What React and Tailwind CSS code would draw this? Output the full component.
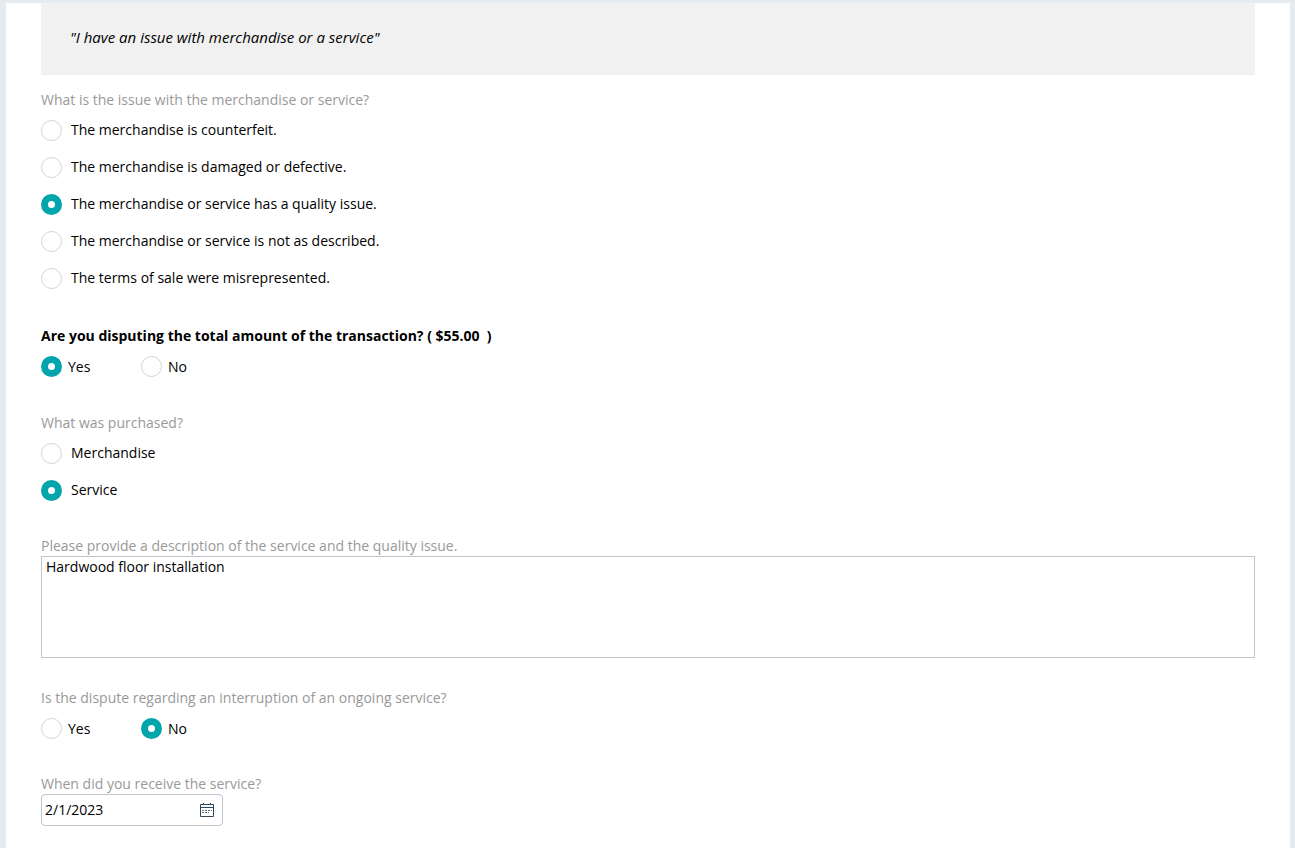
import clsx from 'clsx'

const issues = [
  'The merchandise is counterfeit.',
  'The merchandise is damaged or defective.',
  'The merchandise or service has a quality issue.',
  'The merchandise or service is not as described.',
  'The terms of sale were misrepresented.',
]

function RadioOption({ name, label, checked, className }) {
  return (
    <label className={clsx('flex cursor-pointer', className)}>
      <input
        type="radio"
        name={name}
        value={label}
        defaultChecked={checked}
        className="size-[21px] shrink-0 appearance-none rounded-full border border-[#cfd4dc] bg-white checked:border-7 checked:border-[#03a5ad]"
      />
      <span>{label}</span>
    </label>
  )
}

function RadioGroup({ legend, name, options, value, inline = false, strong = false, className }) {
  return (
    <fieldset className={className}>
      <legend className={clsx('mb-[10px] whitespace-pre', strong ? 'font-bold' : 'text-[#999999]')}>
        {legend}
      </legend>
      <div className={inline ? 'flex' : 'flex flex-col items-start gap-4'}>
        {options.map((option) => (
          <RadioOption
            key={option}
            name={name}
            label={option}
            checked={option === value}
            className={inline ? 'h-[21px] w-[100px] items-center gap-[6px]' : 'h-[21px] items-start gap-[9px]'}
          />
        ))}
      </div>
    </fieldset>
  )
}

function CalendarIcon() {
  return (
    <svg viewBox="0 0 14 14" className="size-[14px]" fill="none" stroke="#33475b" aria-hidden="true">
      <path d="M.5 1.5h13v12H.5zM.5 4.5h13M3.5 0v2M10.5 0v2" />
      <path d="M2 7.5h10M2 9.5h7" strokeDasharray="2 1" strokeOpacity=".8" />
    </svg>
  )
}

export default function App() {
  return (
    <div className="min-h-screen bg-[#e5ebee] pt-[3px] pr-[5px] pl-[6px] font-['Open_Sans',sans-serif] text-[14px] leading-[20px] text-black">
      <form className="min-h-[calc(100vh-3px)] bg-white px-[35px] pb-5">
        <div className="h-[72px] bg-[#f1f1f1] px-[29px] pt-6 text-[15px] italic">
          "I have an issue with merchandise or a service"
        </div>

        <RadioGroup
          className="mt-[15px]"
          legend="What is the issue with the merchandise or service?"
          name="issue"
          options={issues}
          value={issues[2]}
        />

        <RadioGroup
          className="mt-[37px]"
          legend="Are you disputing the total amount of the transaction? ( $55.00  )"
          name="total"
          options={['Yes', 'No']}
          value="Yes"
          inline
          strong
        />

        <RadioGroup
          className="mt-9"
          legend="What was purchased?"
          name="purchased"
          options={['Merchandise', 'Service']}
          value="Service"
        />

        <div className="mt-[35px]">
          <label htmlFor="description" className="block text-[#999999]">
            Please provide a description of the service and the quality issue.
          </label>
          <textarea
            id="description"
            defaultValue="Hardwood floor installation"
            className="block h-[102px] w-full resize-none border border-[#bfc4cf] px-1 outline-none"
          />
        </div>

        <RadioGroup
          className="mt-[30px]"
          legend="Is the dispute regarding an interruption of an ongoing service?"
          name="ongoing"
          options={['Yes', 'No']}
          value="No"
          inline
        />

        <div className="mt-[35px]">
          <label htmlFor="received" className="block text-[#999999]">
            When did you receive the service?
          </label>
          <div className="flex h-8 w-[182px] items-center rounded-[4px] border border-[#bfc4cf] pr-2 pl-[3px]">
            <input id="received" type="text" defaultValue="2/1/2023" className="min-w-0 flex-1 outline-none" />
            <button type="button" aria-label="Open calendar" className="cursor-pointer">
              <CalendarIcon />
            </button>
          </div>
        </div>
      </form>
    </div>
  )
}
